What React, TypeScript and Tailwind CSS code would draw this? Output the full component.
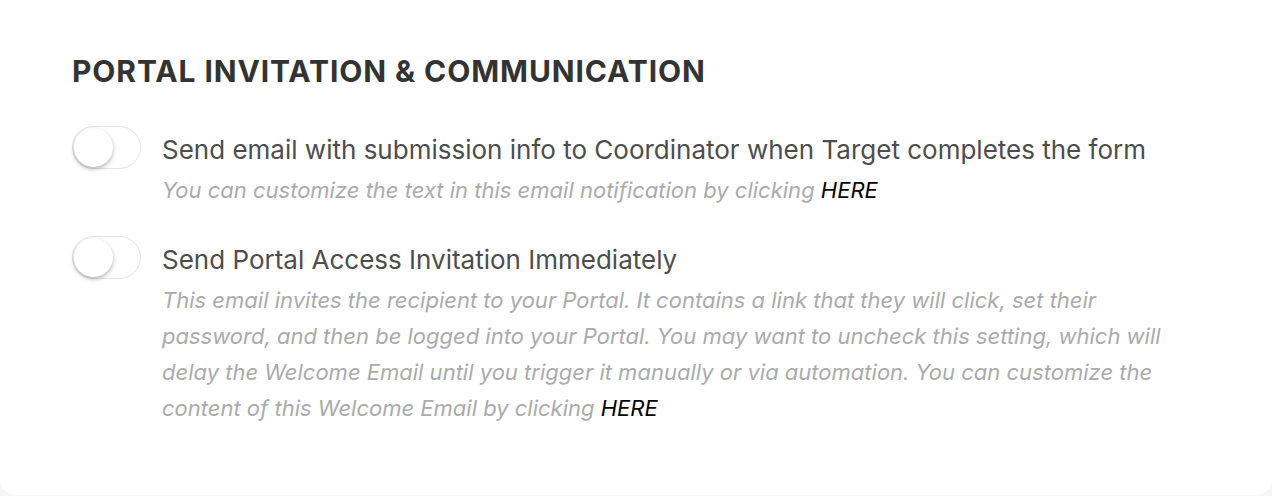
import { useState } from "react";

type ToggleProps = {
  checked: boolean;
  onChange: (value: boolean) => void;
};

function Toggle({ checked, onChange }: ToggleProps) {
  return (
    <button
      type="button"
      role="switch"
      aria-checked={checked}
      onClick={() => onChange(!checked)}
      className={`relative flex h-[43px] w-[69px] shrink-0 items-center rounded-full border border-[#e3e3e3] transition-colors ${
        checked ? "bg-[#4a90e2]" : "bg-white"
      }`}
    >
      <span
        className={`absolute top-[1px] h-[39px] w-[39px] rounded-full bg-white shadow-[0_2px_4px_rgba(0,0,0,0.3)] transition-all ${
          checked ? "left-[27px]" : "left-[1px]"
        }`}
      />
    </button>
  );
}

type SettingRowProps = {
  label: string;
  description: string;
  checked: boolean;
  onChange: (value: boolean) => void;
};

function SettingRow({ label, description, checked, onChange }: SettingRowProps) {
  return (
    <div className="flex items-start gap-[21px]">
      <Toggle checked={checked} onChange={onChange} />
      <div className="max-w-[1004px] pt-[8px]">
        <p className="text-[26px] leading-[32px] text-[#4d4d4d]">{label}</p>
        <p className="mt-[6px] text-[22px] italic leading-[36px] text-[#ababab]">
          {description}{" "}
          <a href="#" className="text-black">
            HERE
          </a>
        </p>
      </div>
    </div>
  );
}

export default function App() {
  const [notifyCoordinator, setNotifyCoordinator] = useState(false);
  const [sendInvite, setSendInvite] = useState(false);

  return (
    <div className="min-h-[496px] bg-[#f6f6f6] font-['Inter',sans-serif]">
      <section className="h-[495px] rounded-b-[16px] bg-white px-[72px] pt-[54px]">
        <h2 className="text-[30px] font-bold leading-[34px] tracking-[0.03em] text-[#333333]">
          PORTAL INVITATION &amp; COMMUNICATION
        </h2>

        <div className="mt-[38px] flex flex-col gap-[28px]">
          <SettingRow
            label="Send email with submission info to Coordinator when Target completes the form"
            description="You can customize the text in this email notification by clicking"
            checked={notifyCoordinator}
            onChange={setNotifyCoordinator}
          />
          <SettingRow
            label="Send Portal Access Invitation Immediately"
            description="This email invites the recipient to your Portal. It contains a link that they will click, set their password, and then be logged into your Portal. You may want to uncheck this setting, which will delay the Welcome Email until you trigger it manually or via automation. You can customize the content of this Welcome Email by clicking"
            checked={sendInvite}
            onChange={setSendInvite}
          />
        </div>
      </section>
    </div>
  );
}
